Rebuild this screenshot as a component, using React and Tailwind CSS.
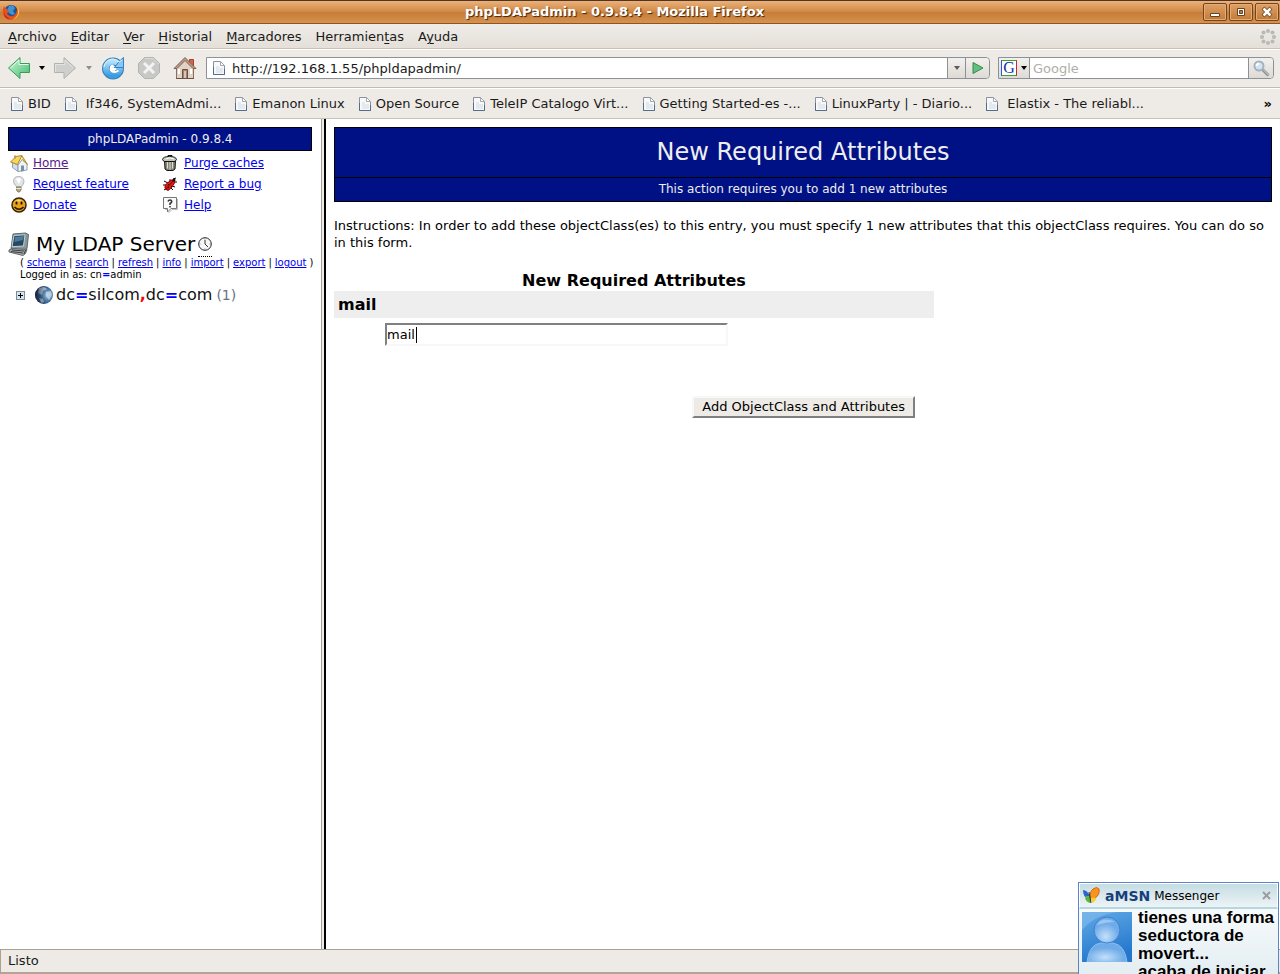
import React, { useState } from 'react';

const menus = [
  ['', 'A', 'rchivo'],
  ['', 'E', 'ditar'],
  ['', 'V', 'er'],
  ['', 'H', 'istorial'],
  ['', 'M', 'arcadores'],
  ['Herramien', 't', 'as'],
  ['A', 'y', 'uda'],
];

const bookmarks = [
  { label: 'BID' },
  { label: 'If346, SystemAdmi...', spaced: true },
  { label: 'Emanon Linux' },
  { label: 'Open Source' },
  { label: 'TeleIP Catalogo Virt...' },
  { label: 'Getting Started-es -...' },
  { label: 'LinuxParty | - Diario...' },
  { label: 'Elastix - The reliabl...', spaced: true },
];

const serverActions = ['schema', 'search', 'refresh', 'info', 'import', 'export', 'logout'];

const FirefoxIcon = () => (
  <svg width="18" height="18" viewBox="0 0 18 18" aria-hidden="true">
    <circle cx="9" cy="9" r="7" fill="#234f94" />
    <path d="M7 3q4-2 6 2l-2 3 2 3-3 1-3-2-2-3z" fill="#3f93cf" />
    <path d="M2 3q-2 4-1 8 2 6 8 6 6 0 8-6 1-5-3-9 2 5 0 8-2 4-6 3-3-1-3-3l3-1-2-1-1-2-2-1z" fill="#e3551c" />
    <path d="M14 2q4 4 3 9-2 5-7 6 5-3 6-7 0-4-2-8z" fill="#f8c533" />
    <path d="M2 5q-1 6 3 9l3 2q-5 0-6-5z" fill="#b8232c" />
  </svg>
);

const PageIcon = () => (
  <svg width="12" height="14" viewBox="0 0 12 14" className="shrink-0" aria-hidden="true">
    <path d="M.5.5h7l4 4v9H.5z" fill="#f7f8fa" stroke="#8b929d" />
    <path d="M.5 6v7.500h11V8" fill="none" stroke="#506c8f" />
    <path d="M7.500.5v4h4z" fill="#fff" stroke="#a2a8b0" />
    <path d="M3 5h3v2h4v5H3z" fill="#e6e8ec" />
  </svg>
);

const Caret = ({ className = 'fill-black' }) => (
  <svg width="6" height="4" viewBox="0 0 6 4" className={className} aria-hidden="true">
    <path d="M0 0h6L3 4z" />
  </svg>
);

const BackIcon = () => (
  <svg width="24" height="24" viewBox="0 0 24 24" aria-hidden="true">
    <defs>
      <linearGradient id="back" x2="1" y2="1">
        <stop stopColor="#d0f5d4" />
        <stop offset="1" stopColor="#3fbd72" />
      </linearGradient>
    </defs>
    <path d="M1.500 12 13 1.500V7.500h9.500v9H13v6z" fill="url(#back)" stroke="#3a9c5b" strokeLinejoin="round" />
    <path d="M3.500 12 12 4v4.500h9.500" fill="none" stroke="#e4fbe4" />
  </svg>
);

const ForwardIcon = () => (
  <svg width="24" height="24" viewBox="0 0 24 24" aria-hidden="true">
    <path d="M22.500 12 11 1.500V7.500H1.500v9H11v6z" fill="#cfcfcd" stroke="#b1b1ae" strokeLinejoin="round" />
    <path d="M2.500 16V8.500H12V4l8 7.500" fill="none" stroke="#e3e3e1" />
  </svg>
);

const ReloadIcon = () => (
  <svg width="24" height="24" viewBox="0 0 24 24" aria-hidden="true">
    <defs>
      <linearGradient id="reload" x2="0" y2="1">
        <stop stopColor="#b5e0fb" />
        <stop offset="1" stopColor="#3d9ce0" />
      </linearGradient>
    </defs>
    <circle cx="12" cy="12.500" r="7" fill="none" stroke="#3580bd" strokeWidth="8" />
    <circle cx="12" cy="12.500" r="7" fill="none" stroke="url(#reload)" strokeWidth="6" />
    <path d="M18.500 5 22.500 1.500v10H13.500z" fill="#86c8f3" stroke="#3580bd" strokeLinejoin="round" />
    <path d="M3 11q1-7 8-8 4 0 7 3l3-2" fill="none" stroke="#dcf3ff" />
    <path d="M15.500 13H9.500Q9.500 9.500 12.500 9.500M9.500 13q.5 3 4 3 2 0 4-1.500" fill="none" stroke="#fff" strokeWidth="1.800" />
  </svg>
);

const StopIcon = () => (
  <svg width="24" height="24" viewBox="0 0 24 24" aria-hidden="true">
    <path d="M7.500 1.500h9l6 6v9l-6 6h-9l-6-6v-9z" fill="#c8c8c6" stroke="#b3b3b0" />
    <path d="M8 2.500h8l5.500 5.500" fill="none" stroke="#ddd" />
    <path d="m7 7 10 10M17 7 7 17" stroke="#f3f3f2" strokeWidth="3" />
  </svg>
);

const HomeIcon = () => (
  <svg width="24" height="24" viewBox="0 0 24 24" aria-hidden="true">
    <path d="M16.500 3.500h4V10h-4z" fill="#d9624a" stroke="#a6432f" />
    <path d="M3.500 11 12 3l8.500 8v11.500h-17z" fill="#e2d2c6" stroke="#8a6f5d" />
    <path d="M1 12.500 12 1.500l11 11h-3l-8-8-8 8z" fill="#b89c88" stroke="#80624f" />
    <path d="M9.500 13.500h5v9h-5z" fill="#a08472" stroke="#6c5042" />
    <path d="M11 15h2v7h-2z" fill="#d8c6b8" />
    <path d="M5 13h2v5H5zM17 13h2v5h-2z" fill="#fff" />
    <path d="M3 22.500h18" stroke="#6a5143" />
  </svg>
);

const ThrobberIcon = () => (
  <svg width="16" height="16" viewBox="0 0 16 16" fill="#b9b9b6" aria-hidden="true">
    <circle cx="8" cy="2" r="2" />
    <circle cx="12.500" cy="3.500" r="2" />
    <circle cx="14" cy="8" r="2" />
    <circle cx="12.500" cy="12.500" r="2" />
    <circle cx="8" cy="14" r="2" />
    <circle cx="3.500" cy="12.500" r="2" />
    <circle cx="2" cy="8" r="2" />
    <circle cx="3.500" cy="3.500" r="2" />
  </svg>
);

const MagnifierIcon = () => (
  <svg width="17" height="17" viewBox="0 0 17 17" aria-hidden="true">
    <path d="m9.500 9.500 6 6" stroke="#8d9093" strokeWidth="3" />
    <path d="m10 9.500 5.500 5.500" stroke="#d5d7d9" />
    <circle cx="6" cy="6" r="4.500" fill="#cfe4f5" stroke="#a6b1bb" strokeWidth="2" />
    <path d="M3.500 6q0-2 2.500-2.500" fill="none" stroke="#fff" strokeWidth="2" />
  </svg>
);

const SideHomeIcon = () => (
  <svg width="18" height="18" viewBox="0 0 18 18" aria-hidden="true">
    <path d="M2.500 8.500 8 11v6.500l-5.500-4z" fill="#d5dde6" stroke="#93a1b0" />
    <path d="M8 11l4.500-6L17 10v6l-9 1.500z" fill="#eef3f8" stroke="#8fa0b1" />
    <path d="M.5 8 6 2.500 12 1.500 7.500 10.500z" fill="#f7d65b" stroke="#ae8a2c" />
    <path d="m12 2 5.500 8.500-5-4.500" fill="#efc744" stroke="#b08c2d" />
    <path d="M11 11.500h3V17l-3 .5z" fill="#7990a6" />
    <path d="M4 1.500h2v3H4z" fill="#b89b58" />
  </svg>
);

const BulbIcon = () => (
  <svg width="18" height="18" viewBox="0 0 18 18" aria-hidden="true">
    <path d="M3.500 6.500Q3.500 1.500 8.500 1.500t5.500 5Q14 9 11 12H7Q3.500 9 3.500 6.500z" fill="#e2e5e8" stroke="#b0b5ba" />
    <path d="M6 4q3-2 5 0L9 9z" fill="#fff" />
    <path d="M6.500 12h4.500v3l-1.500 2H8l-1.500-2z" fill="#b5ab83" stroke="#827b66" />
    <path d="M6 13.500h5" stroke="#eee7bd" />
  </svg>
);

const SmileyIcon = () => (
  <svg width="18" height="18" viewBox="0 0 18 18" aria-hidden="true">
    <circle cx="9" cy="9" r="7" fill="#eaa21e" stroke="#362607" strokeWidth="1.500" />
    <path d="M4 6q4-5 10 0-5-1-10 0z" fill="#fcd25f" />
    <path d="M6.500 5.500v3M11.500 5.500v3" stroke="#221600" strokeWidth="1.800" />
    <path d="M4.500 11q4.500 4.500 9 0" fill="none" stroke="#221600" strokeWidth="1.500" />
  </svg>
);

const TrashIcon = () => (
  <svg width="18" height="18" viewBox="0 0 18 18" aria-hidden="true">
    <path d="M3.500 6.500h11L14 15l-2 1.500H6L4 15z" fill="#85857a" stroke="#15150f" />
    <path d="M6.500 7.500v7M9 7.500v8M11.500 7.500v7" stroke="#deded2" />
    <path d="M1.500 5.500Q2 2.500 8.500 2.500t7 3L14 7.500H3z" fill="#c4c4b9" stroke="#15150f" />
    <path d="M7 2.500v-1h4v1" fill="none" stroke="#15150f" />
    <path d="M4.500 5Q9 2.500 13 5" fill="none" stroke="#fff" />
  </svg>
);

const BugIcon = () => (
  <svg width="18" height="18" viewBox="0 0 18 18" aria-hidden="true">
    <path d="M3 6l4 2M2 10h4M3 15l3-2M9 4v3M7 16v-3M11 11l3 1M10 13l2 2M12 4l3-1M13 7h3" stroke="#180000" />
    <path d="M4 13q-1-3 3-5.500 3-3.500 6-2.500 2 2-1 5.500-2 4-5 4.500-3 0-3-2z" fill="#e01812" stroke="#8c0808" />
    <path d="m5 14 7-8" stroke="#700" />
    <path d="M7 9h1v1H7zM10 11h1v1h-1zM7 12h1v1H7z" fill="#200" />
    <circle cx="13" cy="5" r="1.500" fill="#220505" />
  </svg>
);

const HelpIcon = () => (
  <svg width="18" height="18" viewBox="0 0 18 18" aria-hidden="true">
    <path d="M2.500 1.500h13v11H10L6.500 16v-3.500h-4z" fill="#fafafa" stroke="#777" strokeLinejoin="round" />
    <path d="M4 13.500h2M16.500 3v10.500H11L7.500 17" fill="none" stroke="#bbb" />
    <path d="M7 5.500Q7.500 4 9 4t1.800 1.500q0 1-1.800 2v1.500M9 10v1.500" fill="none" stroke="#333" strokeWidth="1.500" />
  </svg>
);

const ServerIcon = () => (
  <svg width="22" height="24" viewBox="0 0 22 24" aria-hidden="true">
    <path d="M5 2 17.500 1l3 1.500-1.500 14-3 1.500-13-1z" fill="#8b9697" stroke="#5d696c" />
    <path d="m6 3.500 11-.7-1.500 11.200-11.500.7z" fill="#244964" stroke="#c7d1d2" />
    <path d="m7 5 9-1-1 4-8.500 2z" fill="#4d7c9b" />
    <path d="m1 18 4-1.500 14 1-1.500 4-2.500 2L1 20z" fill="#a5abab" stroke="#606768" />
    <path d="m4 18 12 1M3 19.500l12 1.500M16 22l1.500-4" stroke="#3b4142" />
  </svg>
);

const ClockIcon = () => (
  <svg width="14" height="16" viewBox="0 0 14 16" aria-hidden="true">
    <circle cx="7" cy="8" r="6.300" fill="#f7f7f7" stroke="#222" />
    <path d="M7 4v4l3 3" fill="none" stroke="#333" />
    <path d="M7 2.500v1M7 12.500v1M1.500 8h1M11.500 8h1" stroke="#888" />
  </svg>
);

const GlobeIcon = () => (
  <svg width="20" height="20" viewBox="0 0 20 20" aria-hidden="true">
    <defs>
      <radialGradient id="globe" cx=".7" cy=".5" r=".7">
        <stop stopColor="#9cc4e4" />
        <stop offset=".5" stopColor="#4673a2" />
        <stop offset="1" stopColor="#1a2c4c" />
      </radialGradient>
      <linearGradient id="shade">
        <stop stopColor="#14223c" stopOpacity=".7" />
        <stop offset=".6" stopColor="#14223c" stopOpacity="0" />
      </linearGradient>
    </defs>
    <circle cx="10" cy="10" r="9" fill="url(#globe)" />
    <path d="m5 3 5-1 3 2-4 2-1 4-4-2zM12 7l5-1 1 4-3 5-3-4zM5 13l4 1 1 3-3 1z" fill="#d3dde2" opacity=".7" />
    <circle cx="10" cy="10" r="9" fill="url(#shade)" />
  </svg>
);

const ExpandIcon = () => (
  <svg width="9" height="9" viewBox="0 0 9 9" shapeRendering="crispEdges" aria-hidden="true">
    <path d="M.5.5h8v8h-8z" fill="#d3e4ee" stroke="#7a8c97" />
    <path d="M2 4.500h5M4.500 2v5" stroke="#000" />
  </svg>
);

const AmsnIcon = () => (
  <svg width="18" height="18" viewBox="0 0 18 18" aria-hidden="true">
    <path d="M8 9Q5 3 1 3q0 4 2 7z" fill="#2b63c8" />
    <path d="M8 9Q4 9 3 11q1 4 5 5 2-2 0-7z" fill="#57b53c" />
    <path d="M9 12Q7 5 11 2q4-3 6 0 1 6-4 9z" fill="#f7941d" stroke="#d8650b" />
    <path d="M9 11q4-1 5 0 0 3-4 5z" fill="#f5cf2c" />
    <path d="m7 5 2 11" stroke="#34323d" />
  </svg>
);

const AvatarIcon = () => (
  <svg width="50" height="50" viewBox="0 0 50 50" aria-hidden="true">
    <defs>
      <linearGradient id="sky" x2=".3" y2="1">
        <stop stopColor="#62aae6" />
        <stop offset="1" stopColor="#2477cd" />
      </linearGradient>
      <radialGradient id="face" cx=".45" cy=".75">
        <stop stopColor="#c3e0fa" />
        <stop offset="1" stopColor="#6eabe8" />
      </radialGradient>
    </defs>
    <path d="M0 0h50v50H0z" fill="url(#sky)" />
    <path d="M0 18Q14 2 36 0H0z" fill="#82bdec" opacity=".6" />
    <path d="M5 50q2-18 14-19h12q12 2 14 19z" fill="url(#face)" stroke="#8cbdee" />
    <circle cx="25" cy="18" r="13" fill="url(#face)" stroke="#3d82cf" />
    <path d="M15 13q5-9 18-3-8 0-18 3z" fill="#acd2f6" opacity=".7" />
  </svg>
);

const sideLinks = [
  { label: 'Home', icon: SideHomeIcon, color: 'text-[#551a8b]' },
  { label: 'Purge caches', icon: TrashIcon, color: 'text-[#0000ee]' },
  { label: 'Request feature', icon: BulbIcon, color: 'text-[#0000ee]' },
  { label: 'Report a bug', icon: BugIcon, color: 'text-[#0000ee]' },
  { label: 'Donate', icon: SmileyIcon, color: 'text-[#0000ee]' },
  { label: 'Help', icon: HelpIcon, color: 'text-[#0000ee]' },
];

const WindowButton = ({ label, children }) => (
  <button
    aria-label={label}
    className="flex h-[18px] w-6 items-center justify-center rounded-xs border border-[#70451f] bg-linear-to-b from-[#dfa066] to-[#c27b38] shadow-[inset_0_0_0_1px_#e3ab77]"
  >
    <svg width="12" height="12" viewBox="0 0 12 12" aria-hidden="true">
      {children}
    </svg>
  </button>
);

const TitleBar = () => (
  <header className="flex h-6 shrink-0 items-center border-t border-b border-t-[#4f3423] border-b-[#8a5625] bg-[linear-gradient(#eab27c,#e0a064_20%,#d08a45_48%,#c67d37_52%,#d6924f)] pl-0.5">
    <FirefoxIcon />
    <h1 className="flex-1 pb-0.5 pl-[6px] text-center font-bold text-white [text-shadow:1px_1px_1px_#3c2410]">
      phpLDAPadmin - 0.9.8.4 - Mozilla Firefox
    </h1>
    <div className="flex gap-0.5 pr-px">
      <WindowButton label="Minimizar">
        <path d="M1.500 7.500h9v3h-9z" fill="#fff" stroke="#6a421f" />
      </WindowButton>
      <WindowButton label="Maximizar">
        <path d="M2.500 2.500h7v7h-7z" fill="#fff" stroke="#6a421f" />
        <path d="M4.500 4.500h3v3h-3z" fill="#c27b38" stroke="#6a421f" />
      </WindowButton>
      <WindowButton label="Cerrar">
        <path d="m2 2 8 8M10 2l-8 8" stroke="#6a421f" strokeWidth="4" />
        <path d="m2.500 2.500 7 7M9.500 2.500l-7 7" stroke="#fff" strokeWidth="2.500" />
      </WindowButton>
    </div>
  </header>
);

const MenuBar = () => (
  <nav className="flex h-[26px] shrink-0 items-center gap-[14px] border-b border-white bg-linear-to-b from-[#efece8] to-[#e4dfd8] px-2 shadow-[inset_0_-1px_0_#cdc0b2]">
    {menus.map(([before, key, after]) => (
      <button key={key + after}>
        {before}
        <span className="underline underline-offset-2">{key}</span>
        {after}
      </button>
    ))}
    <span className="-mr-1 ml-auto">
      <ThrobberIcon />
    </span>
  </nav>
);

const Toolbar = () => (
  <div className="flex h-[39px] shrink-0 items-center border-b border-white pr-1.5 pb-0.5 pl-[7px] shadow-[inset_0_-1px_0_#c3bbb2]">
    <button aria-label="Atrás"><BackIcon /></button>
    <button aria-label="Historial atrás" className="ml-2"><Caret /></button>
    <button aria-label="Adelante" className="ml-2"><ForwardIcon /></button>
    <button aria-label="Historial adelante" className="ml-[9px]"><Caret className="fill-[#8f8f8c]" /></button>
    <button aria-label="Recargar" className="ml-[9px]"><ReloadIcon /></button>
    <button aria-label="Detener" className="ml-3"><StopIcon /></button>
    <button aria-label="Inicio" className="ml-3"><HomeIcon /></button>

    <div className="ml-[9px] flex h-[22px] flex-1 rounded-r-sm border border-[#8c9198] bg-white">
      <span className="flex w-6 items-center justify-center"><PageIcon /></span>
      <input
        aria-label="Dirección"
        defaultValue="http://192.168.1.55/phpldapadmin/"
        className="min-w-0 flex-1 pl-px outline-none"
      />
      <button aria-label="Direcciones" className="flex w-[18px] items-center justify-center border-l border-[#8c9198] bg-linear-to-b from-[#f3f1ee] to-[#dedad5]">
        <Caret className="fill-[#5b5b58]" />
      </button>
      <button aria-label="Ir" className="flex w-6 items-center justify-center rounded-r-sm border-l border-[#8c9198] bg-linear-to-b from-[#f3f1ee] to-[#dedad5]">
        <svg width="12" height="12" viewBox="0 0 12 12" aria-hidden="true">
          <path d="M1 .5 11 6 1 11.500z" fill="#62bf7d" stroke="#348a4c" />
        </svg>
      </button>
    </div>

    <div className="ml-2 flex h-[22px] w-[276px] rounded-r-sm border border-[#8c9198] bg-white">
      <button aria-label="Motor de búsqueda" className="flex w-[31px] items-center justify-center gap-1 border-r border-[#8c9198] bg-linear-to-b from-[#f3f1ee] to-[#dedad5]">
        <span className="flex size-4 items-center justify-center border border-t-[#34a437] border-r-[#d3232a] border-b-[#34a437] border-l-[#1f5ce0] bg-white font-['Liberation_Serif',serif] text-base leading-4 text-[#1331a8]">
          G
        </span>
        <Caret />
      </button>
      <input aria-label="Buscar" placeholder="Google" className="min-w-0 flex-1 pl-[3px] outline-none placeholder:text-[#b0aeaa]" />
      <button aria-label="Iniciar búsqueda" className="flex w-[25px] items-center justify-center rounded-r-sm border-l border-[#8c9198] bg-linear-to-b from-[#f3f1ee] to-[#dedad5]">
        <MagnifierIcon />
      </button>
    </div>
  </div>
);

const BookmarksBar = () => (
  <nav className="flex h-[30px] shrink-0 items-center gap-[14px] border-b border-[#cdc0b2] pr-2 pl-[11px]">
    {bookmarks.map(({ label, spaced }) => (
      <a key={label} href="#" className="flex items-center gap-[5px] whitespace-nowrap">
        <PageIcon />
        <span className={spaced ? 'pl-1' : ''}>{label}</span>
      </a>
    ))}
    <button aria-label="Más marcadores" className="ml-auto font-bold text-black">»</button>
  </nav>
);

const Sidebar = () => (
  <aside className="w-[321px] shrink-0 bg-white p-2 text-xs text-black">
    <div className="mr-px border border-black bg-[#001085] text-center leading-[22px] text-[#eeeeee]">
      phpLDAPadmin - 0.9.8.4
    </div>
    <ul className="mt-px ml-[2px] grid grid-cols-[151px_1fr]">
      {sideLinks.map(({ label, icon: Icon, color }) => (
        <li key={label} className="flex h-[21px] items-center gap-[5px]">
          <Icon />
          <a href="#" className={`underline ${color}`}>{label}</a>
        </li>
      ))}
    </ul>

    <div className="mt-[17px] flex h-6 items-center">
      <ServerIcon />
      <h2 className="ml-1.5 text-xl leading-6">My LDAP Server</h2>
      <span className="ml-[3px] border-b border-dotted border-black pt-1 pb-1">
        <ClockIcon />
      </span>
    </div>
    <div className="mt-px ml-3 text-[10px] leading-3 whitespace-nowrap">
      <div className="flex gap-[3px]">
        <span>(</span>
        {serverActions.map((action, i) => (
          <React.Fragment key={action}>
            {i > 0 && <span>|</span>}
            <a href="#" className="text-[#0000ee] underline">{action}</a>
          </React.Fragment>
        ))}
        <span>)</span>
      </div>
      <p>
        Logged in as: cn<b className="text-[#0000ff]">=</b>admin
      </p>
    </div>
    <div className="mt-1 ml-2 flex h-5 items-center text-base text-[#111]">
      <button aria-label="Expandir"><ExpandIcon /></button>
      <span className="ml-[9px]"><GlobeIcon /></span>
      <span className="ml-0.5">
        dc<b className="text-[#0000ff]">=</b>silcom<b className="text-[#ff0000]">,</b>dc
        <b className="text-[#0000ff]">=</b>com
      </span>
      <span className="ml-1 text-sm text-gray-500">(1)</span>
    </div>
  </aside>
);

const AttributeForm = () => {
  const [mail, setMail] = useState('mail');

  return (
    <form className="mt-5 w-full max-w-[600px]" onSubmit={(e) => e.preventDefault()}>
      <h3 className="text-center text-base leading-5 font-bold">New Required Attributes</h3>
      <label htmlFor="mail" className="block bg-[#eeeeee] px-1 text-base leading-[27px] font-bold">
        mail
      </label>
      <div className="relative mt-[5px] ml-[51px] w-[343px]">
        <input
          id="mail"
          value={mail}
          onChange={(e) => setMail(e.target.value)}
          className="block h-[23px] w-full border-2 border-t-[#808080] border-r-[#f8f8f8] border-b-[#f8f8f8] border-l-[#808080] outline-none"
        />
        <span className="absolute top-1 left-[31px] h-4 w-px bg-black" />
      </div>
      <div className="mt-[50px] mr-[19px] flex justify-end">
        <button className="h-[22px] border-2 border-t-[#f8f8f8] border-r-[#808080] border-b-[#808080] border-l-[#f8f8f8] bg-[#eeebe7] px-2 leading-4 whitespace-nowrap">
          Add ObjectClass and Attributes
        </button>
      </div>
    </form>
  );
};

const MessengerPopup = () => (
  <div className="absolute right-px bottom-0 h-[92px] w-[201px] overflow-hidden border border-b-0 border-[#5b85c4] bg-linear-to-b from-white to-[#e3eef2] text-black">
    <div className="flex h-[26px] items-center border border-b-2 border-white border-b-[#b6d6e0] bg-linear-to-b from-[#c5dde3] to-[#edf4f6] pr-1.5 pl-0.5">
      <AmsnIcon />
      <b className="ml-[5px] text-sm text-[#173f7c]">aMSN</b>
      <span className="ml-1 text-xs">Messenger</span>
      <button aria-label="Cerrar aviso" className="ml-auto">
        <svg width="9" height="9" viewBox="0 0 9 9" aria-hidden="true">
          <path d="m1 1 7 7M8 1 1 8" stroke="#9d9d9d" strokeWidth="2" />
        </svg>
      </button>
    </div>
    <div className="flex gap-1.5 pl-[3px]">
      <span className="mt-[3px] shrink-0"><AvatarIcon /></span>
      <p className="font-['Liberation_Sans',sans-serif] text-[17px] leading-[18px] font-bold whitespace-nowrap">
        tienes una forma
        <br />
        seductora de
        <br />
        movert...
        <br />
        acaba de iniciar
      </p>
    </div>
  </div>
);

const App = () => (
  <div className="relative flex h-screen flex-col overflow-hidden bg-[#eeebe7] font-['DejaVu_Sans',sans-serif] text-[13px] leading-[17px] text-[#1a1a1a]">
    <TitleBar />
    <MenuBar />
    <Toolbar />
    <BookmarksBar />
    <div className="flex min-h-0 flex-1">
      <Sidebar />
      <div className="w-[5px] shrink-0 border-r-2 border-l border-r-black border-l-[#a09c96] bg-[#eeebe7]" />
      <main className="min-w-0 flex-1 overflow-auto bg-white p-2 text-black">
        <div className="border border-black bg-[#001085] text-center text-[#eeeeee]">
          <h2 className="text-2xl leading-[49px]">New Required Attributes</h2>
          <p className="border-t border-black text-xs leading-[23px]">
            This action requires you to add 1 new attributes
          </p>
        </div>
        <p className="mt-[15px]">
          Instructions: In order to add these objectClass(es) to this entry, you must specify 1 new attributes that this
          objectClass requires. You can do so in this form.
        </p>
        <AttributeForm />
      </main>
    </div>
    <footer className="flex h-[25px] shrink-0 items-center border-t border-b-2 border-l border-t-[#aaa094] border-b-[#b4a497] border-l-[#aaa094] px-[7px] pb-0.5">
      Listo
    </footer>
    <MessengerPopup />
  </div>
);

export default App;
